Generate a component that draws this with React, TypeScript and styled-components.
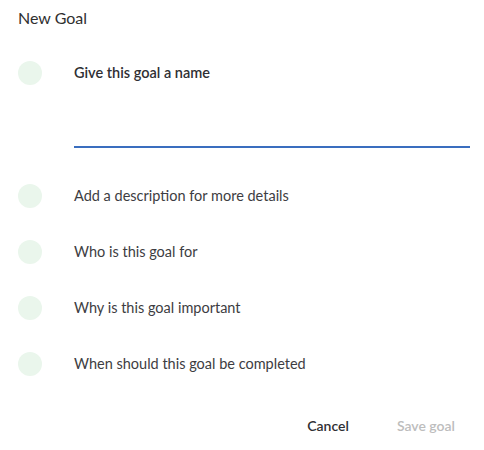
import React from 'react';
import styled, { createGlobalStyle } from 'styled-components';

const GlobalStyle = createGlobalStyle`
  html, body {
    margin: 0;
    padding: 0;
    background: #ffffff;
  }
  body {
    font-family: Lato, "Open Sans", sans-serif;
    -webkit-font-smoothing: antialiased;
  }
`;

const Dialog = styled.div`
  width: 484px;
  height: 450px;
  box-sizing: border-box;
  background: #fff;
  display: flex;
  flex-direction: column;
`;

const Header = styled.div`
  height: 45px;
  padding: 8px 18px 0;
  box-sizing: border-box;
`;

const Title = styled.h2`
  margin: 0;
  font-size: 16px;
  line-height: 20px;
  font-weight: 400;
  color: #303030;
`;

const Step = styled.div`
  height: 56px;
  display: flex;
  align-items: center;
  padding-left: 18px;
  gap: 32px;
`;

const Dot = styled.span`
  width: 24px;
  height: 24px;
  border-radius: 50%;
  background: #eaf6ec;
  flex-shrink: 0;
`;

const Label = styled.span<{ active?: boolean }>`
  font-size: 14.5px;
  line-height: 18px;
  color: ${p => (p.active ? '#2f2f33' : '#3d3d42')};
  font-weight: ${p => (p.active ? 600 : 400)};
`;

const InputWrap = styled.div`
  height: 67px;
  padding: 0 14px 0 74px;
  box-sizing: border-box;
`;

const NameInput = styled.input`
  display: block;
  width: 100%;
  height: 47px;
  border: none;
  border-bottom: 2px solid #3a6ebf;
  outline: none;
  background: transparent;
  font-family: inherit;
  font-size: 14px;
  padding: 0;
  box-sizing: border-box;
`;

const Footer = styled.div`
  flex: 1;
  display: flex;
  justify-content: flex-end;
  align-items: center;
  gap: 24px;
  padding: 8px 17px 0 0;
  box-sizing: border-box;
`;

const Button = styled.button<{ disabled?: boolean }>`
  background: none;
  border: none;
  padding: 8px 12px;
  font-family: inherit;
  font-size: 14px;
  font-weight: 600;
  color: ${p => (p.disabled ? '#bdbdbd' : '#2f2f33')};
  cursor: ${p => (p.disabled ? 'default' : 'pointer')};
`;

const steps = [
  'Add a description for more details',
  'Who is this goal for',
  'Why is this goal important',
  'When should this goal be completed',
];

export default function App() {
  return (
    <>
      <GlobalStyle />
      <Dialog>
        <Header>
          <Title>New Goal</Title>
        </Header>
        <Step>
          <Dot />
          <Label active>Give this goal a name</Label>
        </Step>
        <InputWrap>
          <NameInput aria-label="Goal name" />
        </InputWrap>
        {steps.map(s => (
          <Step key={s}>
            <Dot />
            <Label>{s}</Label>
          </Step>
        ))}
        <Footer>
          <Button>Cancel</Button>
          <Button disabled>Save goal</Button>
        </Footer>
      </Dialog>
    </>
  );
}
